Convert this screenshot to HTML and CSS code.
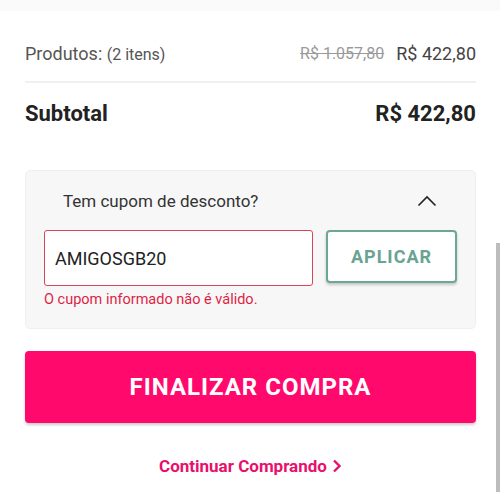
FILE: index.html
```html
<!DOCTYPE html>
<html lang="pt-BR">
<head>
    <meta charset="UTF-8">
    <meta name="viewport" content="width=device-width, initial-scale=1.0">
    <title>Carrinho</title>
    <link rel="stylesheet" href="styles.css">
</head>
<body>
    <div class="topo"></div>
    <div class="resumo">
        <div class="linha produtos">
            <span class="rotulo">Produtos: <small>(2 itens)</small></span>
            <span class="precos">
                <s class="preco-antigo">R$ 1.057,80</s>
                <span class="preco">R$ 422,80</span>
            </span>
        </div>
        <div class="linha subtotal">
            <span>Subtotal</span>
            <span>R$ 422,80</span>
        </div>

        <div class="cupom">
            <div class="cupom-topo">
                <span>Tem cupom de desconto?</span>
                <svg class="seta" width="20" height="12" viewBox="0 0 20 12">
                    <path d="M1.5 10.5 L10 2 L18.5 10.5" fill="none" stroke="#222" stroke-width="1.6"/>
                </svg>
            </div>
            <div class="cupom-form">
                <div class="campo">
                    <input type="text" class="cupom-input" value="AMIGOSGB20">
                    <div class="erro">O cupom informado não é válido.</div>
                </div>
                <button class="btn-aplicar">APLICAR</button>
            </div>
        </div>

        <button class="btn-finalizar">FINALIZAR COMPRA</button>

        <a href="#" class="continuar">Continuar Comprando
            <svg width="10" height="14" viewBox="0 0 10 14">
                <path d="M2 1.5 L7.5 7 L2 12.5" fill="none" stroke="#e8106c" stroke-width="2.4"/>
            </svg>
        </a>
    </div>
    <div class="rolagem"></div>
</body>
</html>
```

FILE: styles.css
```css
body {
    font-family: Roboto, "Liberation Sans", sans-serif;
    margin: 0;
    background-color: white;
    color: #333;
}
.topo {
    height: 11px;
    background-color: #fafafa;
}
.resumo {
    padding: 0 24px 0 25px;
}
.linha {
    display: flex;
    justify-content: space-between;
    align-items: center;
}
.produtos {
    height: 56px;
    padding-top: 14px;
    border-bottom: 2px solid #f0f0f0;
    color: #555;
    font-size: 18px;
}
.produtos small {
    font-size: 16px;
}
.precos {
    display: flex;
    align-items: center;
    gap: 12px;
}
.preco-antigo {
    color: #9a9a9a;
    font-size: 16px;
}
.preco {
    color: #444;
}
.subtotal {
    height: 60px;
    font-size: 22px;
    font-weight: bold;
    color: #222;
}
.cupom {
    margin-top: 27px;
    background-color: #f7f7f7;
    border: 1px solid #efefef;
    border-radius: 5px;
    padding: 0 18px 20px 18px;
}
.cupom-topo {
    display: flex;
    justify-content: space-between;
    align-items: center;
    height: 59px;
    padding: 0 20px 0 19px;
    font-size: 17px;
    color: #333;
}
.cupom-form {
    display: flex;
    gap: 13px;
    align-items: flex-start;
}
.campo {
    flex: 1;
}
.cupom-input {
    display: block;
    box-sizing: border-box;
    width: 100%;
    height: 56px;
    border: 1px solid #d94459;
    border-radius: 3px;
    background-color: white;
    padding: 0 10px;
    font-family: Roboto, "Liberation Sans", sans-serif;
    font-size: 18px;
    color: #222;
    outline: none;
}
.erro {
    margin-top: 5px;
    font-size: 14.5px;
    color: #de1f45;
}
.btn-aplicar {
    width: 131px;
    height: 53px;
    background-color: white;
    border: 2px solid #6aa797;
    border-radius: 4px;
    box-shadow: 0 2px 3px rgba(0, 0, 0, 0.2);
    color: #6aa393;
    font-family: Roboto, "Liberation Sans", sans-serif;
    font-size: 18px;
    font-weight: bold;
    letter-spacing: 1px;
}
.btn-finalizar {
    display: block;
    width: 100%;
    height: 72px;
    margin-top: 22px;
    border: none;
    border-radius: 4px;
    background-color: #ff0a6c;
    box-shadow: 0 2px 3px rgba(0, 0, 0, 0.2);
    color: white;
    font-family: Roboto, "Liberation Sans", sans-serif;
    font-size: 24px;
    font-weight: bold;
    letter-spacing: 1px;
}
.continuar {
    display: flex;
    justify-content: center;
    align-items: center;
    gap: 5px;
    margin-top: 33px;
    color: #e8106c;
    font-size: 17px;
    font-weight: bold;
    text-decoration: none;
}
.rolagem {
    position: absolute;
    right: 0;
    top: 243px;
    bottom: 0;
    width: 4px;
    background-color: #bdbdbd;
}
```
